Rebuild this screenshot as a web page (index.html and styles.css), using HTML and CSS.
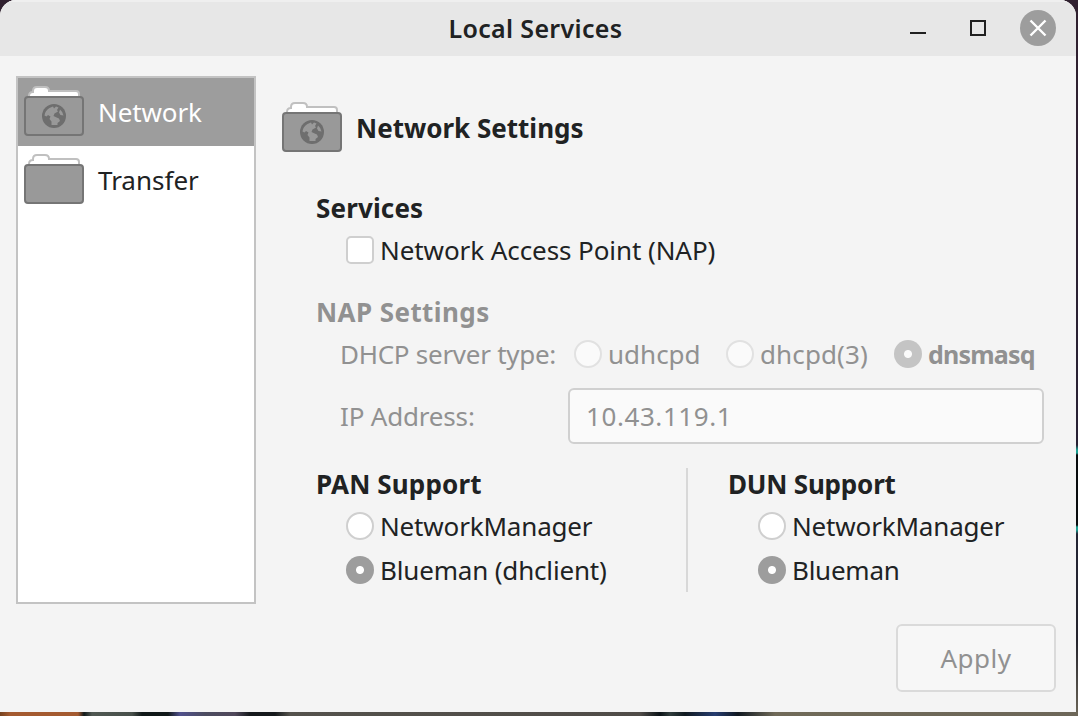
FILE: index.html
```html
<!DOCTYPE html>
<html lang="en">
<head>
<meta charset="utf-8">
<title>Local Services</title>
<link rel="stylesheet" href="styles.css">
</head>
<body>
<svg class="defs" width="0" height="0">
  <symbol id="folder" viewBox="0 0 60 50">
    <path class="paper" d="M5 14V10Q5 6 9 6V5Q9 1 13 1H21Q25 1 25 5H52Q55 5 55 8V14Z"/>
    <rect class="front" x="1" y="11" width="58" height="38" rx="3"/>
  </symbol>
  <symbol id="globe" viewBox="0 0 24 24">
    <circle cx="12" cy="12" r="12" fill="#6e6e6e"/>
    <path fill="#999" d="M2.500 11.500Q3 6.500 7.500 4L11 2.500L12 4.500L14 2.500L16.500 3.500L15 6L16 7.500L12.500 9.500L11.500 12L13.500 13L17 14.500L18 17L15.500 19V21L9.500 21L9.500 17.500L7.500 15L8.500 12.500L6 11L4.500 12.500ZM18 5.500Q21 8 21.500 11.500L18.500 11L17 8.500Z"/>
  </symbol>
</svg>
<div class="window">
  <header class="titlebar">
    <h1 class="title">Local Services</h1>
    <div class="controls">
      <svg class="control" viewBox="0 0 36 36"><path d="M10 22H26V24H10Z" fill="#202020"/></svg>
      <svg class="control" viewBox="0 0 36 36"><rect x="11" y="11" width="14" height="14" fill="none" stroke="#202020" stroke-width="2"/></svg>
      <svg class="control" viewBox="0 0 36 36"><circle cx="18" cy="18" r="18" fill="#9d9d9d"/><path d="M10.500 10.500L25.500 25.500M25.500 10.500L10.500 25.500" stroke="#fff" stroke-width="2.400"/></svg>
    </div>
  </header>
  <main class="body">
    <nav class="sidebar">
      <div class="item selected"><svg class="icon" viewBox="0 0 60 50"><use href="#folder"/><use href="#globe" x="18" y="18" width="24" height="24"/></svg><span class="t-network">Network</span></div>
      <div class="item"><svg class="icon" viewBox="0 0 60 50"><use href="#folder"/></svg><span>Transfer</span></div>
    </nav>
    <section class="content">
      <div class="page-head"><svg class="icon" viewBox="0 0 60 50"><use href="#folder"/><use href="#globe" x="18" y="18" width="24" height="24"/></svg><h2 class="heading">Network Settings</h2></div>
      <div class="group services">
        <h3 class="heading t-services">Services</h3>
        <label class="option indent"><span class="check"></span><span class="t-nap">Network Access Point (NAP)</span></label>
      </div>
      <div class="group disabled">
        <h3 class="heading t-napset">NAP Settings</h3>
        <div class="dhcp">
          <span class="label t-dhcp">DHCP server type:</span>
          <label class="option first"><span class="radio"></span><span>udhcpd</span></label>
          <label class="option second"><span class="radio"></span><span class="t-dhcpd">dhcpd(3)</span></label>
          <label class="option"><span class="radio on"></span><b class="t-dnsmasq">dnsmasq</b></label>
        </div>
        <div class="address"><span class="label t-ip">IP Address:</span><div class="entry"><span class="t-addr">10.43.119.1</span></div></div>
      </div>
      <div class="support">
        <div class="group pan">
          <h3 class="heading t-pan">PAN Support</h3>
          <label class="option indent"><span class="radio"></span><span class="t-nm">NetworkManager</span></label>
          <label class="option indent"><span class="radio on"></span><span class="t-nm">Blueman (dhclient)</span></label>
        </div>
        <div class="group dun">
          <h3 class="heading t-dun">DUN Support</h3>
          <label class="option indent"><span class="radio"></span><span class="t-nm">NetworkManager</span></label>
          <label class="option indent"><span class="radio on"></span><span class="t-blueman">Blueman</span></label>
        </div>
      </div>
    </section>
  </main>
  <footer class="actions"><button class="apply" disabled><span class="t-apply">Apply</span></button></footer>
</div>
</body>
</html>
```
FILE: styles.css
```css
* { box-sizing: border-box; }
body {
  margin: 0; width: 1078px; height: 716px; overflow: hidden;
  font: 26px/32px "Noto Sans", sans-serif; color: #202223;
  white-space: nowrap;
  background:
    linear-gradient(90deg, #75421f 0, #a45a30 10px, #a45a30 78px, #10191a 84px, #505852 92px, #48504b 132px, #101818 142px, #101818 168px, #50508c 180px, #4c4c60 205px, #50485a 235px, #15191c 250px, #15191c 275px, #54524c 290px, #504c48 640px, #0a1216 660px, #303c3c 670px, #101a20 685px, #263c70 715px, #101820 738px, #706a58 775px, #6c6658 100%) 0 712px / 1078px 4px no-repeat,
    linear-gradient(180deg, #30202f 0, #272033 445px, #1b9f91 450px, #1b9f91 453px, #080b0d 455px, #080b0d 525px, #1b9f91 527px, #1b9f91 530px, #222433 534px, #24232c 640px, #6c6658 100%);
}
.defs { display: block; }
.window { width: 1076px; height: 712px; background: #f4f4f4; border-radius: 16px 16px 0 0; overflow: hidden; }
.titlebar { height: 56px; background: #e7e7e7; box-shadow: inset 0 2px #efefef; display: grid; grid-template-columns: 1fr auto 1fr; align-items: center; padding-right: 20px; }
.title { grid-column: 2; margin: 0 0 0 15px; font-size: 25px; font-weight: 600; width: 174px; letter-spacing: .33px; }
.controls { display: flex; gap: 24px; justify-content: flex-end; }
.control { width: 36px; height: 36px; display: block; }
.body { display: flex; height: 548px; padding: 20px 0 0 16px; }
.sidebar { width: 240px; height: 528px; background: #fff; border: 2px solid #c3c3c3; }
.item { height: 68px; display: flex; align-items: center; gap: 14px; padding-left: 6px; }
.selected { background: #9d9d9d; color: #fff; }
.icon { width: 60px; height: 50px; flex: none; }
.item .icon { margin-bottom: 2px; }
.paper { fill: #fff; stroke: #c0c0c0; stroke-width: 2; }
.selected .paper { stroke: #858585; }
.front { fill: #999; stroke: #757575; stroke-width: 2; }
.content { padding: 24px 0 0 26px; width: 820px; flex: none; }
.page-head { display: flex; height: 56px; align-items: center; gap: 14px; }
.page-head .icon { margin-bottom: 2px; }
.heading { margin: 0; font-size: 26px; line-height: 32px; font-weight: 700; }
.group { display: flex; flex-direction: column; padding-left: 34px; }
.services { margin-top: 36px; height: 104px; }
.option { display: flex; align-items: center; height: 44px; gap: 6px; flex: none; }
.heading + .option, .dhcp { margin-top: 4px; }
.indent { padding-left: 30px; }
.check, .radio { width: 28px; height: 28px; flex: none; border: 2px solid #cfcfcf; background: #fff; }
.check { border-radius: 5px; }
.radio { border-radius: 50%; }
.radio.on { border: 0; background: radial-gradient(circle, #fff 3.500px, #9d9d9d 4.500px); }
.disabled { color: #919191; }
.disabled .radio { border-color: #e1e1e1; background: #fafafa; }
.disabled .radio.on { background: radial-gradient(circle, #fafafa 3.500px, #c4c4c4 4.500px); }
.dhcp { display: flex; height: 44px; align-items: center; padding-left: 24px; }
.dhcp .label { width: 234px; flex: none; }
.first { width: 152px; }
.second { width: 168px; }
.address { display: flex; align-items: center; margin-top: 12px; padding-left: 24px; }
.address .label { width: 228px; }
.entry { width: 476px; height: 56px; display: flex; align-items: center; padding-left: 16px; border: 2px solid #d0d0d0; border-radius: 6px; background: #fafafa; }
.support { display: flex; margin-top: 24px; height: 124px; }
.pan { width: 406px; border-right: 2px solid #d8d8d8; }
.dun { padding-left: 40px; }
.actions { display: flex; justify-content: flex-end; padding: 20px 20px 0 0; }
.apply { width: 160px; height: 68px; border: 2px solid #dadada; border-radius: 6px; background: #f7f7f7; color: #919191; font: inherit; padding: 0; }

/* Per-label tracking */
.t-network { letter-spacing: -.1px; }
.t-services { letter-spacing: .15px; }
.t-nap { letter-spacing: -.08px; }
.t-napset { letter-spacing: .42px; }
.t-dhcp { letter-spacing: -.27px; }
.t-dhcpd { letter-spacing: .12px; }
.t-dnsmasq { font-size: 25px; letter-spacing: -.8px; }
.t-ip { letter-spacing: -.18px; }
.t-addr { letter-spacing: .58px; }
.t-pan { letter-spacing: .15px; }
.t-dun { letter-spacing: -.2px; }
.t-nm { letter-spacing: -.17px; }
.t-blueman { letter-spacing: -.25px; }
.t-apply { letter-spacing: .5px; }
```
